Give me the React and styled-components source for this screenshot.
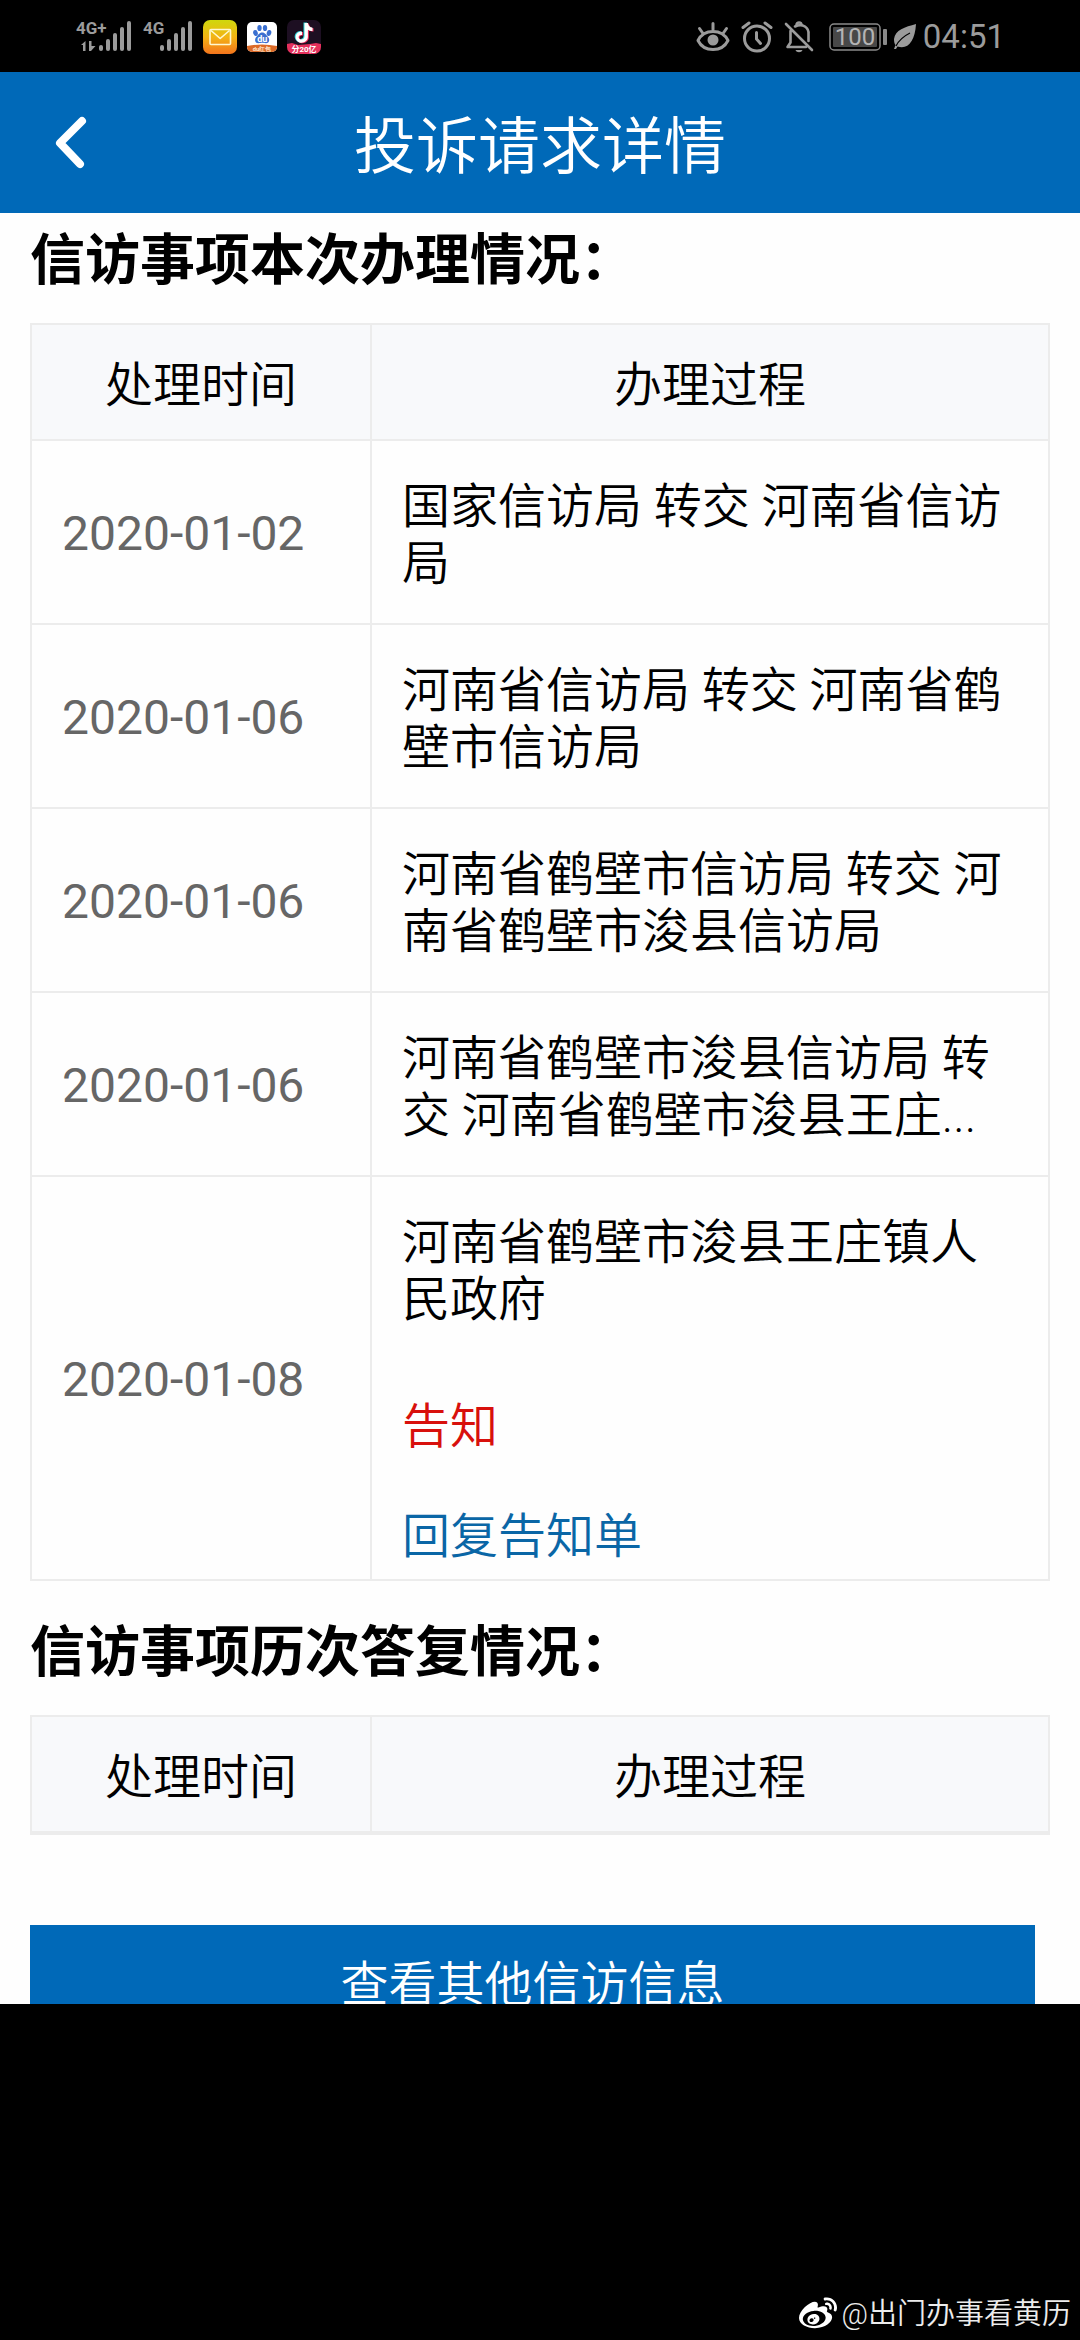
import React from 'react';
import styled, { createGlobalStyle } from 'styled-components'
import { FaWeibo } from 'react-icons/fa'

const GlobalStyle = createGlobalStyle`
  * {
    box-sizing: border-box;
  }

  body {
    margin: 0;
    background-color: #000;
    font-family: Roboto, "Noto Sans CJK SC", sans-serif;
  }
`

const Screen = styled.div`
  display: flex;
  flex-direction: column;
  height: 100vh;
`

const StatusBar = styled.div`
  display: flex;
  flex-shrink: 0;
  align-items: center;
  justify-content: space-between;
  height: 72px;
  padding: 2px 75px 0;
  background-color: #000;
  color: #9b9b9b;
`

const StatusGroup = styled.div`
  display: flex;
  align-items: center;
  gap: ${props => props.$gap}px;

  & svg {
    display: block;
  }
`

const Clock = styled.span`
  font-size: 33px;
  line-height: 36px;
`

const NavBar = styled.header`
  display: grid;
  flex-shrink: 0;
  grid-template-columns: 140px 1fr 140px;
  align-items: center;
  height: 141px;
  background-color: #0069b8;
  color: #fff;
`

const BackButton = styled.button`
  display: flex;
  align-items: center;
  height: 100%;
  padding: 0 0 0 52px;
  border: 0;
  background: none;
  color: inherit;
`

const NavTitle = styled.h1`
  margin: 0;
  padding-top: 10px;
  font-size: 62px;
  font-weight: 350;
  line-height: 72px;
  text-align: center;
`

const Content = styled.main`
  flex: 1;
  min-height: 0;
  padding: 0 30px;
  overflow: hidden;
  background-color: #fefefe;
  color: #000;
`

const SectionTitle = styled.h2`
  margin: 0;
  padding: ${props => props.$first ? 14 : 38}px 0 30px;
  font-size: 55px;
  font-weight: bold;
  line-height: 66px;
`

const Table = styled.table`
  width: 100%;
  border: 2px solid #ececec;
  border-bottom-width: ${props => props.$empty ? 4 : 2}px;
  border-spacing: 0;
  table-layout: fixed;
  font-size: 48px;
  line-height: 57px;

  & th:first-child {
    width: 338px;
  }

  & th + th,
  & td + td {
    border-left: 2px solid #ececec;
  }

  & tbody td {
    border-top: 2px solid #ececec;
  }
`

const HeadCell = styled.th`
  height: 114px;
  padding: 6px 0 0;
  background-color: #f8f9fb;
  font-weight: 350;
`

const DateCell = styled.td`
  padding: 2px 30px 0;
  color: #666;
`

const StepCell = styled.td`
  padding: 37px 30px ${props => props.$hasReply ? 14 : 31}px;
  font-weight: 350;
`

const StepResult = styled.p`
  margin: 70px 0 53px;
  color: #d8100c;
`

const ReplyLink = styled.a`
  display: block;
  color: #0a66a6;
  text-decoration: none;
`

const MoreButton = styled.button`
  display: block;
  width: calc(100% - 15px);
  height: 116px;
  margin-top: 90px;
  padding: 0 0 6px;
  border: 0;
  background-color: #0069b8;
  color: #fff;
  font-family: inherit;
  font-size: 48px;
  font-weight: 350;
`

const Footer = styled.footer`
  display: flex;
  flex-shrink: 0;
  align-items: flex-end;
  justify-content: flex-end;
  gap: 5px;
  height: 336px;
  padding: 0 9px 7px;
  background-color: #000;
  color: #ececec;
  font-size: 29px;
  font-weight: 350;
  line-height: 38px;
`

const steps = [
  { date: '2020-01-02', text: '国家信访局 转交 河南省信访局' },
  { date: '2020-01-06', text: '河南省信访局 转交 河南省鹤壁市信访局' },
  { date: '2020-01-06', text: '河南省鹤壁市信访局 转交 河南省鹤壁市浚县信访局' },
  { date: '2020-01-06', text: '河南省鹤壁市浚县信访局 转交 河南省鹤壁市浚县王庄...' },
  { date: '2020-01-08', text: '河南省鹤壁市浚县王庄镇人民政府', result: '告知', reply: '回复告知单' },
]

const barTops = [25, 19, 13, 7, 1]

function Signal({ label, barsX, arrows }) {
  return (
    <svg width={barsX + 33} height="42" viewBox={`0 -4 ${barsX + 33} 42`} fill="#9b9b9b">
      <text x="1" y="14" fontSize="17" fontWeight="bold" fontFamily="Liberation Sans Narrow, Roboto, sans-serif">{label}</text>
      {arrows && (
        <path d="M6 25l4.500-4v10h-2.500v-6zM14 21h2.500v5l4 0-4.500 5h-2z" />
      )}
      {barTops.map((top, i) => (
        <rect key={top} x={barsX + i * 7} y={top} width="4" height={31 - top} rx="2" />
      ))}
    </svg>
  )
}

function MailIcon() {
  return (
    <svg width="34" height="34" viewBox="0 0 34 34">
      <defs>
        <linearGradient id="mail" x1="0" y1="0" x2="0" y2="1">
          <stop offset="0" stopColor="#cfd80c" />
          <stop offset="0.5" stopColor="#f3b414" />
          <stop offset="1" stopColor="#f4741c" />
        </linearGradient>
      </defs>
      <rect width="34" height="34" rx="7" fill="url(#mail)" />
      <g fill="none" stroke="#fff8d0" strokeWidth="1.600" strokeLinejoin="round">
        <rect x="7" y="9.500" width="20.500" height="15" rx="1" />
        <path d="M8 10.500l9.200 8 9.300-8" />
      </g>
    </svg>
  )
}

function BaiduIcon() {
  return (
    <svg width="30" height="30" viewBox="0 0 30 30">
      <defs>
        <clipPath id="baidu"><rect width="30" height="30" rx="5" /></clipPath>
      </defs>
      <g clipPath="url(#baidu)">
        <rect width="30" height="30" fill="#fff" />
        <g fill="#3a6fd0">
          <ellipse cx="8.500" cy="11" rx="2.300" ry="3" transform="rotate(-15 8.500 11)" />
          <ellipse cx="12.500" cy="6" rx="2.200" ry="3.100" />
          <ellipse cx="18" cy="6" rx="2.200" ry="3.100" />
          <ellipse cx="22" cy="11" rx="2.300" ry="3" transform="rotate(15 22 11)" />
          <path d="M15.200 10.500c3 0 3.800 2.500 5.600 4.200 2 1.800 2.300 6.300-1.800 6.500-1.700 0-2.500-.4-3.800-.4s-2.200.4-3.900.4c-4-.2-3.800-4.700-1.800-6.500 1.900-1.700 2.700-4.200 5.700-4.200z" />
        </g>
        <text x="15.200" y="20" fontSize="9" fontWeight="bold" fontFamily="Roboto, sans-serif" textAnchor="middle" fill="#fff">du</text>
        <path d="M0 24q15-3 30 0v6H0z" fill="#dc6a28" />
        <text x="15" y="29" fontSize="6" fontWeight="bold" fontFamily="Roboto, sans-serif" textAnchor="middle" fill="#ffe6cc">du红包</text>
      </g>
    </svg>
  )
}

function DouyinIcon() {
  const note = 'M17.500 3h3.400c.3 2.800 1.900 4.400 4.600 4.700v3.400c-1.800 0-3.300-.5-4.600-1.400v6.900c0 6.600-8.500 8.300-11.400 3.300-2.300-4.100.6-8.900 5.500-8.500v3.600c-2.200-.4-3.700.9-3.300 2.700.6 2.600 5.800 2.500 5.800-1.500z'
  return (
    <svg width="34" height="34" viewBox="0 0 34 34">
      <defs>
        <clipPath id="douyin"><rect width="34" height="34" rx="7" /></clipPath>
      </defs>
      <g clipPath="url(#douyin)">
        <rect width="34" height="34" fill="#1d0f22" />
        <path d={note} fill="#35d6dc" transform="translate(-1 -.5)" />
        <path d={note} fill="#ef2c5a" transform="translate(1 .5)" />
        <path d={note} fill="#fff" />
        <path d="M0 24l5-1 6 2 12-1 6-1 5 1v10H0z" fill="#e5305c" />
        <text x="17" y="32" fontSize="8" fontWeight="bold" fontFamily="Roboto, Noto Sans CJK SC, sans-serif" textAnchor="middle" fill="#fff">分20亿</text>
      </g>
    </svg>
  )
}

function EyeIcon() {
  return (
    <svg width="34" height="32" viewBox="0 0 34 32" fill="none" stroke="currentColor" strokeWidth="3" strokeLinecap="round">
      <path d="M2 19.500C8 7.500 26 7.500 32 19.500 26 31.500 8 31.500 2 19.500z" strokeLinejoin="round" />
      <circle cx="17" cy="19" r="5.500" fill="currentColor" stroke="none" />
      <path d="M17 2.500v6M3.500 7.500l3.500 5M30.500 7.500l-3.500 5" />
    </svg>
  )
}

function AlarmIcon() {
  return (
    <svg width="32" height="32" viewBox="0 0 32 32" fill="none" stroke="currentColor" strokeWidth="3" strokeLinecap="round">
      <circle cx="16" cy="17.500" r="12.500" />
      <path d="M15.500 11.500v6.500l4 4.500M2 6.500L8 2M30 6.500L24 2" />
    </svg>
  )
}

function MutedBellIcon() {
  return (
    <svg width="30" height="32" viewBox="0 0 30 32" fill="none" stroke="currentColor" strokeWidth="2.600">
      <path d="M11 5.500C19 1.500 25 7 24.500 13v7M6.500 10v11.500L3.500 26H22M2 3l26 26" strokeLinecap="round" strokeLinejoin="round" />
      <path d="M12.500 4a2.500 2.500 0 0 1 5 0" />
      <path d="M11.500 29h7c-1 3-6 3-7 0z" fill="currentColor" stroke="none" />
    </svg>
  )
}

function Battery() {
  return (
    <svg width="58" height="28" viewBox="0 0 58 28">
      <rect x="1" y="1" width="50" height="26" rx="4" fill="none" stroke="#8a8a8a" strokeWidth="1.500" />
      <rect x="4" y="4" width="44" height="20" rx="1" fill="#484848" />
      <text x="26" y="22" fontSize="24" fontFamily="Roboto, sans-serif" textAnchor="middle" fill="#b4b4b4">100</text>
      <rect x="54" y="6" width="4" height="16" rx="1" fill="#8a8a8a" />
    </svg>
  )
}

function LeafIcon() {
  return (
    <svg width="24" height="26" viewBox="0 0 24 26">
      <path d="M23 0C12 3 2 6 1 15c0 3 .5 5 1.500 6L1 25h2l1.500-2.500C15 26 22 17 23 0z" fill="#9b9b9b" />
      <path d="M3 22C6 16 11 12 17 9" fill="none" stroke="#000" strokeWidth="1.200" />
    </svg>
  )
}

function ProcessTable({ rows = [] }) {
  return (
    <Table $empty={rows.length === 0}>
      <thead>
        <tr>
          <HeadCell scope="col">处理时间</HeadCell>
          <HeadCell scope="col">办理过程</HeadCell>
        </tr>
      </thead>
      {rows.length > 0 && (
        <tbody>
          {rows.map((row, i) => (
            <tr key={i}>
              <DateCell>{row.date}</DateCell>
              <StepCell $hasReply={!!row.reply}>
                {row.text}
                {row.result && <StepResult>{row.result}</StepResult>}
                {row.reply && <ReplyLink href="#reply">{row.reply}</ReplyLink>}
              </StepCell>
            </tr>
          ))}
        </tbody>
      )}
    </Table>
  )
}

function App() {
  return (
    <Screen>
      <GlobalStyle />
      <StatusBar>
        <StatusGroup $gap={10}>
          <Signal label="4G+" barsX={24} arrows />
          <Signal label="4G" barsX={18} />
          <MailIcon />
          <BaiduIcon />
          <DouyinIcon />
        </StatusGroup>
        <StatusGroup $gap={15}>
          <StatusGroup $gap={11}>
            <EyeIcon />
            <AlarmIcon />
            <MutedBellIcon />
          </StatusGroup>
          <StatusGroup $gap={6}>
            <Battery />
            <LeafIcon />
            <Clock>04:51</Clock>
          </StatusGroup>
        </StatusGroup>
      </StatusBar>

      <NavBar>
        <BackButton type="button" aria-label="返回">
          <svg width="36" height="54" viewBox="0 0 36 54" fill="none" stroke="currentColor" strokeWidth="8" strokeLinecap="round" strokeLinejoin="round">
            <path d="M30 5L8 27l20 21" />
          </svg>
        </BackButton>
        <NavTitle>投诉请求详情</NavTitle>
      </NavBar>

      <Content>
        <SectionTitle $first>信访事项本次办理情况：</SectionTitle>
        <ProcessTable rows={steps} />
        <SectionTitle>信访事项历次答复情况：</SectionTitle>
        <ProcessTable />
        <MoreButton type="button">查看其他信访信息</MoreButton>
      </Content>

      <Footer>
        <FaWeibo size={38} color="#fff" />
        <span>@出门办事看黄历</span>
      </Footer>
    </Screen>
  )
}

export default App
